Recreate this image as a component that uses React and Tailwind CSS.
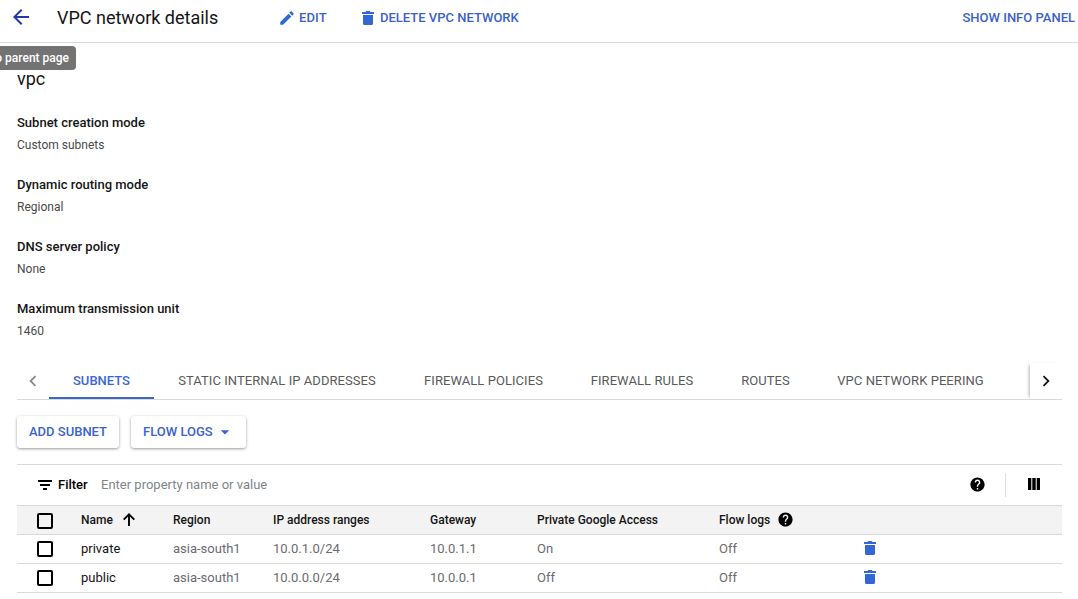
import React from "react";

const PATHS = {
  back: "M20 11H7.83l5.59-5.59L12 4l-8 8 8 8 1.41-1.41L7.83 13H20v-2z",
  edit: "M3 17.25V21h3.75L17.81 9.94l-3.75-3.75L3 17.25zM20.71 7.04a.996.996 0 0 0 0-1.41l-2.34-2.34a.996.996 0 0 0-1.41 0l-1.83 1.83 3.75 3.75 1.83-1.83z",
  left: "M15.41 7.41 14 6l-6 6 6 6 1.41-1.41L10.83 12z",
  right: "M10 6 8.59 7.41 13.17 12l-4.58 4.59L10 18l6-6z",
  down: "M7 10l5 5 5-5z",
  help: "M12 2C6.48 2 2 6.48 2 12s4.48 10 10 10 10-4.48 10-10S17.52 2 12 2zm1 17h-2v-2h2v2zm2.07-7.75-.9.92C13.45 12.9 13 13.5 13 15h-2v-.5c0-1.1.45-2.1 1.17-2.83l1.24-1.26c.37-.36.59-.86.59-1.41 0-1.1-.9-2-2-2s-2 .9-2 2H8c0-2.21 1.79-4 4-4s4 1.79 4 4c0 .88-.36 1.68-.93 2.25z",
};

function Icon({ name, className }) {
  return (
    <svg viewBox="0 0 24 24" fill="currentColor" className={className}>
      <path d={PATHS[name]} />
    </svg>
  );
}

function Trash() {
  return (
    <svg viewBox="0 0 12 14" fill="currentColor" className="h-[14px] w-[12px] shrink-0">
      <path d="M0 1h3.5l.8-1h3.4l.8 1H12v2H0zM1 4h10v8.5a1.5 1.5 0 0 1-1.5 1.5h-7A1.5 1.5 0 0 1 1 12.500z" />
    </svg>
  );
}

function Checkbox() {
  return <span className="ml-5 block h-4 w-4 rounded-[2px] border-2 border-black" />;
}

const details = [
  ["Subnet creation mode", "Custom subnets"],
  ["Dynamic routing mode", "Regional"],
  ["DNS server policy", "None"],
  ["Maximum transmission unit", "1460"],
];

const tabs = [
  ["STATIC INTERNAL IP ADDRESSES", "w-[246px]"],
  ["FIREWALL POLICIES", "w-[167px]"],
  ["FIREWALL RULES", "w-[150px]"],
  ["ROUTES", "w-[97px]"],
  ["VPC NETWORK PEERING", "w-[193px]"],
];

const rows = [
  ["private", "asia-south1", "10.0.1.0/24", "10.0.1.1", "On", "Off"],
  ["public", "asia-south1", "10.0.0.0/24", "10.0.0.1", "Off", "Off"],
];

const GRID = "grid grid-cols-[64px_92px_100px_157px_107px_182px_144px_1fr] items-center border-b border-[#dadada]";

export default function App() {
  return (
    <div className="relative h-[599px] w-[1078px] overflow-hidden bg-white font-['Roboto',sans-serif] text-[13px] text-[#151515] whitespace-nowrap">
      <header className="flex h-[43px] items-center border-b border-[#dadada] pb-[7px] pl-[9px]">
        <Icon name="back" className="mb-[2px] h-6 w-6 shrink-0 text-[#2439a5]" />
        <h1 className="ml-6 w-[221px] text-[18px] leading-6">VPC network details</h1>
        <button className="flex w-[83px] items-center font-medium text-[#3b5fcb]">
          <Icon name="edit" className="mr-[3px] h-[18px] w-[18px] text-[#3367d6]" />
          <span className="tracking-[0.1px]">EDIT</span>
        </button>
        <button className="flex items-center font-medium text-[#3b5fcb]">
          <span className="mr-[6px] ml-px text-[#3367d6]"><Trash /></span>
          DELETE VPC NETWORK
        </button>
        <button className="ml-auto pr-[3px] font-medium text-[#3b5fcb]">SHOW INFO PANEL</button>
      </header>
      <div className="absolute top-[46px] left-0 flex h-6 w-[76px] items-center justify-end overflow-hidden rounded-r-[4px] bg-[#737373] pr-[7px] text-[12px] font-medium text-white">
        Go to parent page
      </div>
      <main className="pr-4 pl-[17px]">
        <h2 className="pt-[24px] text-[18px] leading-6">vpc</h2>
        <dl className="flex flex-col gap-[18px] pt-[21px]">
          {details.map(([k, v]) => (
            <div key={k} className="h-11">
              <dt className="h-[22px] leading-[22px] font-medium">{k}</dt>
              <dd className="h-[22px] text-[12px] leading-[22px] text-[#4a4a4a]">{v}</dd>
            </div>
          ))}
        </dl>

        <nav className="mt-[20px] flex h-[38px] border-b border-[#dadada]">
          <div className="flex w-8 items-center justify-center text-[#8a8a8a]">
            <Icon name="left" className="h-[22px] w-[22px]" />
          </div>
          <div className="flex w-[105px] items-center justify-center border-b-2 border-[#3b67c8] pt-[2px] font-medium text-[#3b67d0]">SUBNETS</div>
          {tabs.map(([t, w]) => (
            <div key={t} className={"flex items-center justify-center tracking-[0.06px] text-[#5a5a5a] " + w}>{t}</div>
          ))}
          <div className="mt-px ml-auto flex w-8 items-center justify-center text-[#151515] shadow-[-3px_0_3px_-2px_rgba(0,0,0,0.3)]">
            <Icon name="right" className="h-[22px] w-[22px]" />
          </div>
        </nav>

        <div className="flex gap-3 pt-4">
          <button className="h-8 w-[102px] rounded-[3px] font-medium text-[#3b62ce] shadow-[0_1px_3px_rgba(0,0,0,0.4)]">ADD SUBNET</button>
          <button className="flex h-8 w-[115px] items-center rounded-[3px] pl-3 font-medium text-[#3b62ce] shadow-[0_1px_3px_rgba(0,0,0,0.4)]">
            <span className="w-[72px] text-left">FLOW LOGS</span>
            <Icon name="down" className="h-5 w-5" />
          </button>
        </div>

        <section className="mt-4 border-t border-[#dadada]">
          <div className="flex h-10 items-center pl-[21px]">
            <svg viewBox="0 0 14 10" className="h-[10px] w-[14px]" fill="black">
              <path d="M0 0h14v2H0zM2 4h10v2H2zM5 8h4v2H5z" />
            </svg>
            <span className="ml-[6px] w-[43px] font-medium text-black">Filter</span>
            <span className="text-[#80868b]">Enter property name or value</span>
            <Icon name="help" className="mb-[2px] ml-auto h-[17px] w-[17px] text-black" />
            <span className="ml-[19.500px] h-6 w-px bg-[#e0e0e0]" />
            <svg viewBox="0 0 12 12" className="mr-[22px] mb-[2px] ml-[22px] h-3 w-3" fill="black">
              <path d="M0 0h3.300v12H0zM4.300 0h3.400v12H4.300zM8.700 0H12v12H8.700z" />
            </svg>
          </div>
          <div className={GRID + " h-[30px] border-t bg-[#f3f3f3] text-[12px] font-medium"}>
            <div className="pt-px"><Checkbox /></div>
            <div className="flex items-center">
              Name
              <svg viewBox="0 0 12 13" className="mb-[2px] ml-[10px] h-[13px] w-3" fill="none" stroke="black" strokeWidth="1.9">
                <path d="M6 13V1.500M.7 6.700 6 1.400l5.300 5.300" />
              </svg>
            </div>
            <div>Region</div>
            <div>IP address ranges</div>
            <div>Gateway</div>
            <div>Private Google Access</div>
            <div className="flex items-center">
              Flow logs
              <Icon name="help" className="mb-[2px] ml-[6.500px] h-[17px] w-[17px] text-black" />
            </div>
          </div>
          {rows.map((r) => (
            <div key={r[0]} className={GRID + " h-[29px] text-[#6b6b70]"}>
              <div><Checkbox /></div>
              <div className="text-[#151515]">{r[0]}</div>
              <div>{r[1]}</div>
              <div>{r[2]}</div>
              <div>{r[3]}</div>
              <div>{r[4]}</div>
              <div>{r[5]}</div>
              <div className="pb-[2px] pl-px text-[#3367d6]"><Trash /></div>
            </div>
          ))}
        </section>
      </main>
    </div>
  );
}
